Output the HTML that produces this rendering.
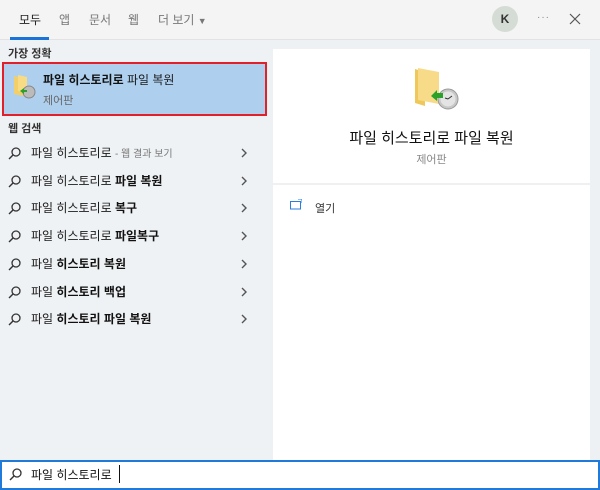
<!DOCTYPE html>
<html><head><meta charset="utf-8"><style>
*{margin:0;padding:0;box-sizing:border-box}
body{width:600px;height:490px;overflow:hidden;background:#eef1f3;font-family:"Liberation Sans","Noto Sans CJK KR",sans-serif;color:#1a1a1a;position:relative}
.top{position:absolute;left:0;top:0;width:600px;height:40px;background:#f3f4f3;border-bottom:1px solid #e2e2e2}
.tab{position:absolute;top:11px;font-size:12px;color:#777}
.left{position:absolute;left:0;top:40px;width:270px;height:420px;background:#eff2f4}
.right{position:absolute;left:273px;top:49px;width:317px;height:411px;background:#fff}
.row{position:absolute;left:0;width:270px;height:26px;font-size:12px;line-height:26px}
.row svg.s{position:absolute;left:8px;top:7px}
.row .t{position:absolute;left:31px}
.row svg.c{position:absolute;left:240px;top:8px}
b{font-weight:700;color:#111}
</style></head><body>
<div class="top">
<div class="tab" style="left:19px;color:#222">모두</div>
<div style="position:absolute;left:10px;top:37px;width:39px;height:3px;background:#1a73d9"></div>
<div class="tab" style="left:59px">앱</div>
<div class="tab" style="left:89px">문서</div>
<div class="tab" style="left:128px">웹</div>
<div class="tab" style="left:158px">더 보기 <span style="font-size:9px">▼</span></div>
<div style="position:absolute;left:492px;top:6px;width:26px;height:26px;border-radius:50%;background:#d5dcd5;font-size:12px;font-weight:bold;text-align:center;line-height:26px;color:#333">K</div>
<div style="position:absolute;left:537px;top:12px;font-size:10px;color:#888;letter-spacing:1px">···</div>
<svg style="position:absolute;left:569px;top:13px" width="12" height="12"><path d="M1 1 L11 11 M11 1 L1 11" stroke="#555" stroke-width="1.2"/></svg>
</div>
<div class="left">
<div style="position:absolute;left:8px;top:5px;font-size:11px;font-weight:bold;color:#333">가장 정확</div>
<div style="position:absolute;left:2px;top:22px;width:265px;height:54px;background:#aed0ee;border:2px solid #e2202a"></div>
<svg style="position:absolute;left:12px;top:33px" width="24" height="26" viewBox="0 0 24 26"><path d="M2 3 L11 5 L11 23 L2 21Z" fill="#f3cf6a"/><path d="M6 2 L15 4 L15 20 L6 18Z" fill="#f8dc85"/><circle cx="17" cy="19" r="6" fill="#bbb" stroke="#888"/><path d="M8 18 l4 -3 v2 h3 v2 h-3 v2z" fill="#2aa22a"/></svg>
<div style="position:absolute;left:43px;top:31px;font-size:12px"><b>파일 히스토리로</b> 파일 복원</div>
<div style="position:absolute;left:43px;top:52px;font-size:11px;color:#666">제어판</div>
<div style="position:absolute;left:8px;top:80px;font-size:11px;font-weight:bold;color:#333">웹 검색</div>
</div>
<div style="position:absolute;left:0;top:140px">
<div class="row" style="top:0"><svg class="s" width="13" height="13"><circle cx="8" cy="5" r="4" fill="none" stroke="#333" stroke-width="1.3"/><line x1="5" y1="8" x2="1" y2="12" stroke="#333" stroke-width="1.4"/></svg><span class="t">파일 히스토리로 <span style="font-size:10px;color:#777">- 웹 결과 보기</span></span><svg class="c" width="8" height="10"><path d="M2 1 L6 5 L2 9" fill="none" stroke="#555" stroke-width="1.4"/></svg></div>
<div class="row" style="top:27.7px"><svg class="s" width="13" height="13"><circle cx="8" cy="5" r="4" fill="none" stroke="#333" stroke-width="1.3"/><line x1="5" y1="8" x2="1" y2="12" stroke="#333" stroke-width="1.4"/></svg><span class="t">파일 히스토리로 <b>파일 복원</b></span><svg class="c" width="8" height="10"><path d="M2 1 L6 5 L2 9" fill="none" stroke="#555" stroke-width="1.4"/></svg></div>
<div class="row" style="top:55.4px"><svg class="s" width="13" height="13"><circle cx="8" cy="5" r="4" fill="none" stroke="#333" stroke-width="1.3"/><line x1="5" y1="8" x2="1" y2="12" stroke="#333" stroke-width="1.4"/></svg><span class="t">파일 히스토리로 <b>복구</b></span><svg class="c" width="8" height="10"><path d="M2 1 L6 5 L2 9" fill="none" stroke="#555" stroke-width="1.4"/></svg></div>
<div class="row" style="top:83.1px"><svg class="s" width="13" height="13"><circle cx="8" cy="5" r="4" fill="none" stroke="#333" stroke-width="1.3"/><line x1="5" y1="8" x2="1" y2="12" stroke="#333" stroke-width="1.4"/></svg><span class="t">파일 히스토리로 <b>파일복구</b></span><svg class="c" width="8" height="10"><path d="M2 1 L6 5 L2 9" fill="none" stroke="#555" stroke-width="1.4"/></svg></div>
<div class="row" style="top:110.8px"><svg class="s" width="13" height="13"><circle cx="8" cy="5" r="4" fill="none" stroke="#333" stroke-width="1.3"/><line x1="5" y1="8" x2="1" y2="12" stroke="#333" stroke-width="1.4"/></svg><span class="t">파일 <b>히스토리 복원</b></span><svg class="c" width="8" height="10"><path d="M2 1 L6 5 L2 9" fill="none" stroke="#555" stroke-width="1.4"/></svg></div>
<div class="row" style="top:138.5px"><svg class="s" width="13" height="13"><circle cx="8" cy="5" r="4" fill="none" stroke="#333" stroke-width="1.3"/><line x1="5" y1="8" x2="1" y2="12" stroke="#333" stroke-width="1.4"/></svg><span class="t">파일 <b>히스토리 백업</b></span><svg class="c" width="8" height="10"><path d="M2 1 L6 5 L2 9" fill="none" stroke="#555" stroke-width="1.4"/></svg></div>
<div class="row" style="top:166.2px"><svg class="s" width="13" height="13"><circle cx="8" cy="5" r="4" fill="none" stroke="#333" stroke-width="1.3"/><line x1="5" y1="8" x2="1" y2="12" stroke="#333" stroke-width="1.4"/></svg><span class="t">파일 <b>히스토리 파일 복원</b></span><svg class="c" width="8" height="10"><path d="M2 1 L6 5 L2 9" fill="none" stroke="#555" stroke-width="1.4"/></svg></div>
</div>
<div class="right">
<svg style="position:absolute;left:140px;top:17px" width="48" height="48" viewBox="0 0 48 48"><path d="M2 3 L12 6 L12 40 L2 37Z" fill="#f0c85a"/><path d="M5 2 L26 6 L26 38 L5 34Z" fill="#f8db88"/><circle cx="35" cy="33" r="10" fill="#c8c8c8" stroke="#999"/><circle cx="35" cy="33" r="7.5" fill="#e4e4e4"/><path d="M35 33 l4 -3 M35 33 l-3 -1" stroke="#333" stroke-width="1"/><path d="M18 30 l6 -6 v3 h6 v5 h-6 v3z" fill="#2aa22a"/></svg>
<div style="position:absolute;left:0;width:317px;top:78px;text-align:center;font-size:15px;color:#111">파일 히스토리로 파일 복원</div>
<div style="position:absolute;left:0;width:317px;top:102px;text-align:center;font-size:11px;color:#888">제어판</div>
<div style="position:absolute;left:0;top:134px;width:317px;height:2px;background:#eef0f2"></div>
<svg style="position:absolute;left:17px;top:150px" width="12" height="11"><rect x="0.5" y="2.5" width="10" height="7.5" fill="none" stroke="#2a7de1"/><path d="M8 0 h4 v4" fill="none" stroke="#2a7de1"/></svg>
<div style="position:absolute;left:42px;top:151px;font-size:11px;color:#333">열기</div>
</div>
<div style="position:absolute;left:0;top:460px;width:600px;height:30px;background:#fff;border:2px solid #1f7ad9"></div>
<svg style="position:absolute;left:9px;top:468px" width="13" height="13"><circle cx="8" cy="5" r="4" fill="none" stroke="#333" stroke-width="1.3"/><line x1="5" y1="8" x2="1" y2="12" stroke="#333" stroke-width="1.4"/></svg>
<div style="position:absolute;left:31px;top:466px;font-size:12px;color:#111">파일 히스토리로</div>
<div style="position:absolute;left:119px;top:465px;width:1px;height:18px;background:#111"></div>
</body></html>
